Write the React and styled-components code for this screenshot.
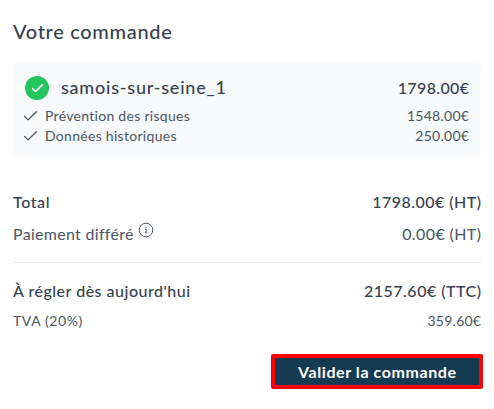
import React from 'react';
import styled, { createGlobalStyle } from 'styled-components';

const GlobalStyle = createGlobalStyle`
  * {
    box-sizing: border-box;
  }
  body {
    margin: 0;
    background-color: #fff;
    color: #374151;
    font-family: Lato, "Open Sans", sans-serif;
  }
`;

const Order = styled.main`
  display: flex;
  flex-direction: column;
  height: 409px;
  padding: 17px 13px 0;
`;

const Text = styled.span`
  padding-bottom: ${(props) => props.$lift || 0}px;
  font-size: ${(props) => props.$size || 16}px;
  font-weight: ${(props) => props.$weight || 400};
  letter-spacing: ${(props) => props.$track || 0}px;
  margin-right: ${(props) => -(props.$track || 0)}px;
  white-space: nowrap;
`;

const Title = styled.h1`
  display: flex;
  margin: 0 0 17px;
  line-height: 28px;
`;

const Card = styled.section`
  height: 96px;
  padding: 12px;
  border-radius: 6px;
  background-color: #f8fafc;
`;

const CardItems = styled.div`
  margin-left: -1px;
  padding-top: 4px;
`;

const Row = styled.div`
  display: flex;
  align-items: center;
  justify-content: space-between;
  height: ${(props) => props.$height}px;
  color: ${(props) => (props.$muted ? '#4b5563' : '#374151')};
`;

const Label = styled.div`
  display: flex;
  align-items: center;
  gap: ${(props) => props.$gap || 0}px;
`;

const Badge = styled.span`
  display: flex;
  align-items: center;
  justify-content: center;
  width: 24px;
  height: 24px;
  border-radius: 50%;
  background-color: #22c55e;
  color: #fff;
`;

const Summary = styled.section`
  display: flex;
  flex-direction: column;
  gap: 8px;
  padding: 32px 0 16px;
  border-bottom: 1px solid #e5e7eb;
`;

const Payment = styled.section`
  display: flex;
  flex-direction: column;
  gap: 6px;
  padding-top: 16px;
`;

const InfoIcon = styled.svg`
  margin: -8px 0 0 4px;
`;

const Submit = styled.button`
  display: flex;
  align-items: center;
  justify-content: center;
  align-self: flex-end;
  width: 212px;
  height: 35px;
  margin: 21px -2px 0 0;
  padding: 0;
  border: 4px solid #ff0000;
  border-radius: 2px;
  background-color: #153b52;
  color: #fff;
  font-family: inherit;
  cursor: pointer;
`;

const Check = ({ width, stroke = 1.2 }) => (
  <svg width={width} height={width * 0.75} viewBox="0 0 12 9" fill="none">
    <path
      d="M.6 5 3.8 8.2 11.4.7"
      stroke="currentColor"
      strokeWidth={stroke}
      strokeLinecap="round"
      strokeLinejoin="round"
    />
  </svg>
);

const items = [
  { name: 'Prévention des risques', price: '1548.00€' },
  { name: 'Données historiques', price: '250.00€' },
];

const App = () => (
  <>
    <GlobalStyle />
    <Order>
      <Title>
        <Text $size={20} $weight={500} $track={0.68}>Votre commande</Text>
      </Title>
      <Card>
        <Row $height={28}>
          <Label $gap={12}>
            <Badge>
              <Check width={11} stroke={1.7} />
            </Badge>
            <Text $size={18} $weight={500} $track={0.78} $lift={2}>samois-sur-seine_1</Text>
          </Label>
          <Text $weight={500} $track={0.36} $lift={2}>1798.00€</Text>
        </Row>
        <CardItems>
          {items.map((item) => (
            <Row key={item.name} $height={20} $muted>
              <Label $gap={8}>
                <Check width={13} />
                <Text $size={14} $track={0.29} $lift={2}>{item.name}</Text>
              </Label>
              <Text $size={14} $track={0.28} $lift={2}>{item.price}</Text>
            </Row>
          ))}
        </CardItems>
      </Card>
      <Summary>
        <Row $height={24}>
          <Text $weight={500} $track={0.6} $lift={2}>Total</Text>
          <Text $weight={500} $track={0.46} $lift={2}>1798.00€ (HT)</Text>
        </Row>
        <Row $height={24} $muted>
          <Label>
            <Text $track={0.3} $lift={2}>Paiement différé</Text>
            <InfoIcon width="16" height="16" viewBox="0 0 16 16" fill="none">
              <circle cx="8" cy="8" r="6.8" stroke="currentColor" strokeWidth="1" />
              <path d="M7 7.2h1.2v3.5M6.8 10.8h2.6" stroke="currentColor" strokeWidth=".9" />
              <circle cx="8" cy="5.2" r=".7" fill="currentColor" />
            </InfoIcon>
          </Label>
          <Text $track={0.4} $lift={2}>0.00€ (HT)</Text>
        </Row>
      </Summary>
      <Payment>
        <Row $height={24}>
          <Text $weight={500} $track={0.5} $lift={2}>À régler dès aujourd'hui</Text>
          <Text $weight={500} $track={0.5} $lift={2}>2157.60€ (TTC)</Text>
        </Row>
        <Row $height={24} $muted>
          <Text $size={14} $track={0.6} $lift={2}>TVA (20%)</Text>
          <Text $size={14} $track={0.25} $lift={2}>359.60€</Text>
        </Row>
      </Payment>
      <Submit>
        <Text $weight={700} $track={0.58}>Valider la commande</Text>
      </Submit>
    </Order>
  </>
);

export default App;
